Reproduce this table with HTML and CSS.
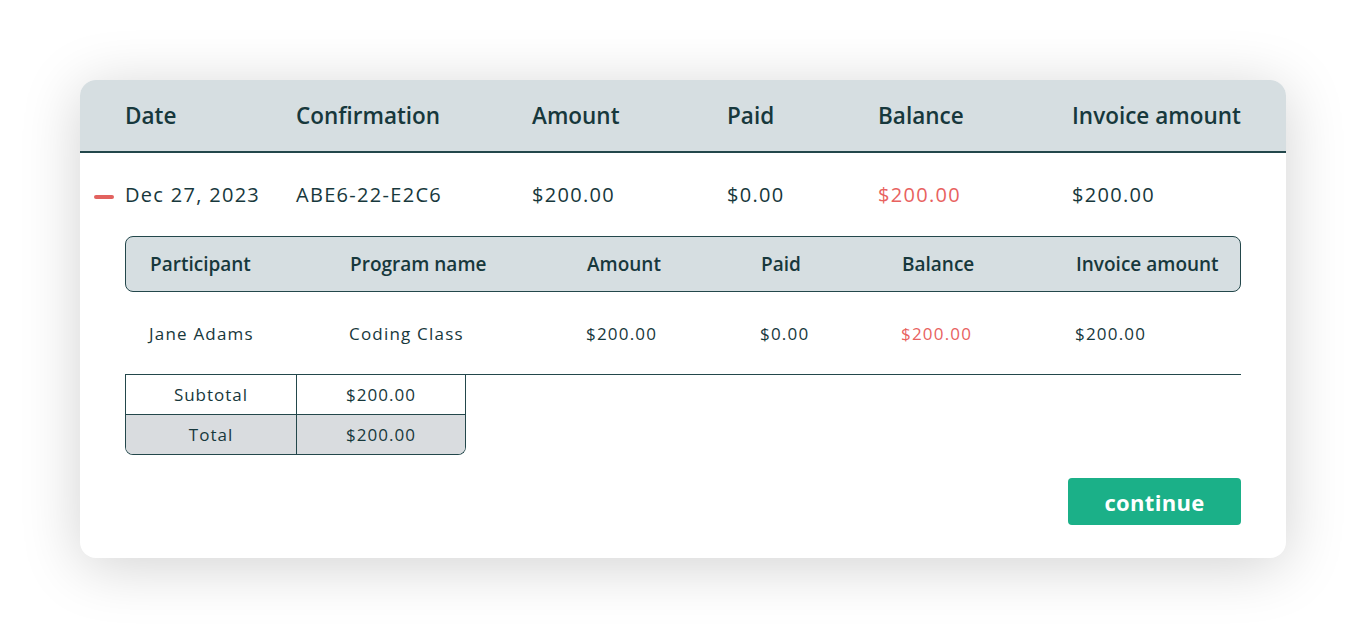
FILE: index.html
```html
<!DOCTYPE html>
<html>
<head>
<meta charset="utf-8">
<link rel="stylesheet" href="styles.css">
</head>
<body>
<div class="card">
  <div class="head row-grid">
    <div>Date</div><div>Confirmation</div><div>Amount</div><div>Paid</div><div>Balance</div><div>Invoice amount</div>
  </div>
  <div class="main-row row-grid">
    <div class="date-cell"><span class="minus"></span>Dec 27, 2023</div>
    <div>ABE6-22-E2C6</div><div>$200.00</div><div>$0.00</div><div class="red">$200.00</div><div>$200.00</div>
  </div>
  <div class="detail">
    <div class="sub-head sub-grid">
      <div>Participant</div><div>Program name</div><div>Amount</div><div>Paid</div><div>Balance</div><div>Invoice amount</div>
    </div>
    <div class="sub-row sub-grid">
      <div>Jane Adams</div><div>Coding Class</div><div>$200.00</div><div>$0.00</div><div class="red">$200.00</div><div>$200.00</div>
    </div>
    <div class="totals">
      <div class="t-row"><div class="t-cell">Subtotal</div><div class="t-cell">$200.00</div></div>
      <div class="t-row total"><div class="t-cell">Total</div><div class="t-cell">$200.00</div></div>
    </div>
  </div>
  <div class="actions">
    <button class="continue">continue</button>
  </div>
</div>
</body>
</html>
```

FILE: styles.css
```css
* { box-sizing: border-box; }
html, body { margin: 0; padding: 0; background: #ffffff; }
body {
  font-family: "Open Sans", "Noto Sans", sans-serif;
  color: #17383c;
  padding: 80px 80px 0 80px;
  height: 638px;
  overflow: hidden;
}
.card {
  width: 1206px;
  height: 478px;
  background: #fff;
  border-radius: 16px;
  box-shadow: 0 8px 60px rgba(0,0,0,0.18);
  overflow: hidden;
}
.row-grid {
  display: grid;
  grid-template-columns: 171px 236px 195px 151px 194px 1fr;
  padding-left: 45px;
}
.head {
  height: 73px;
  background: #d6dee1;
  border-bottom: 2px solid #23474b;
  align-items: center;
  font-size: 22.5px;
  font-weight: 600;
  padding-bottom: 1px;
}
.main-row {
  height: 83px;
  align-items: center;
  font-size: 20px;
  letter-spacing: 1.3px;
}
.date-cell { position: relative; }
.minus {
  position: absolute;
  left: -31px;
  top: 50%;
  margin-top: 0;
  width: 20px;
  height: 4px;
  border-radius: 2px;
  background: #e2625f;
}
.red { color: #e8625f; }
.detail { padding: 0 45px; }
.sub-grid {
  display: grid;
  grid-template-columns: 200px 237px 174px 141px 174px 1fr;
  padding-left: 24px;
  align-items: center;
}
.sub-head {
  height: 56px;
  background: #d6dee1;
  border: 1px solid #23474b;
  border-radius: 8px;
  font-size: 19px;
  font-weight: 600;
}
.sub-row {
  height: 83px;
  border-bottom: 1px solid #23474b;
  font-size: 17px;
  letter-spacing: 1.2px;
}
.totals {
  width: 341px;
  border: 1px solid #23474b;
  border-top: none;
  border-radius: 0 0 8px 8px;
  overflow: hidden;
}
.t-row {
  display: grid;
  grid-template-columns: 170px 1fr;
  height: 39px;
}
.t-row + .t-row { border-top: 1px solid #23474b; height: 40px; }
.t-cell {
  display: flex;
  align-items: center;
  justify-content: center;
  font-size: 17px;
  letter-spacing: 1px;
}
.t-cell + .t-cell { border-left: 1px solid #23474b; }
.total { background: #d9dcdf; }
.actions {
  display: flex;
  justify-content: flex-end;
  padding: 23px 45px 0 0;
}
.continue {
  width: 173px;
  height: 47px;
  border: none;
  border-radius: 4px;
  background: #1bb088;
  color: #fff;
  font-family: "Open Sans", "Noto Sans", sans-serif;
  font-size: 22px;
  font-weight: 700;
  letter-spacing: 0.3px;
  padding: 0;
}
```
